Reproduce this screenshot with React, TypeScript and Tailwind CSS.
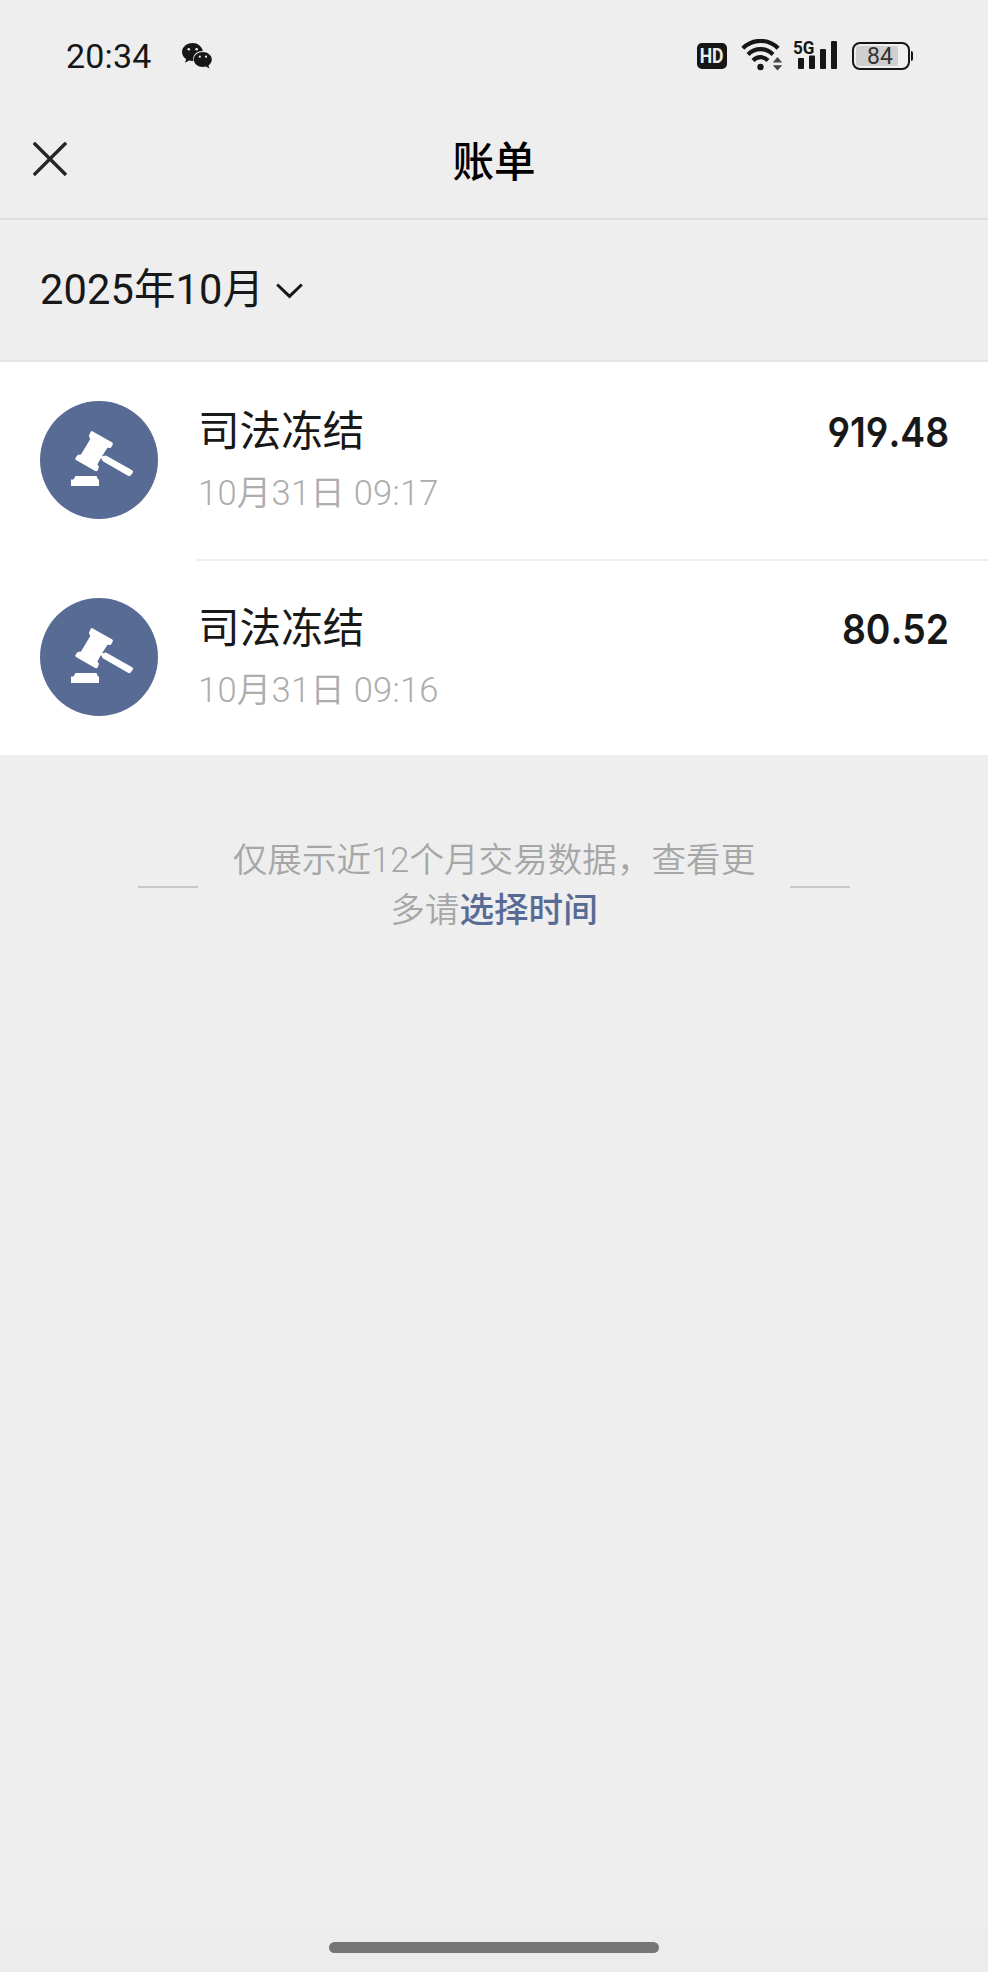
import React from "react";

interface Bill {
  id: number;
  title: string;
  time: string;
  amount: string;
}

const BILLS: Bill[] = [
  { id: 1, title: "司法冻结", time: "10月31日 09:17", amount: "919.48" },
  { id: 2, title: "司法冻结", time: "10月31日 09:16", amount: "80.52" },
];

const WeChatIcon = () => (
  <svg className="w-[30px] h-[26px]" viewBox="0 0 30 26" fill="#161616">
    <path d="M10.500 0C4.700 0 0 4 0 9c0 2.900 1.600 5.400 4.100 7l-1 3.700 4-2.100c1.100.300 2.200.400 3.400.400h1c-.200-.700-.300-1.300-.300-2 0-4.500 4.200-8 9.300-8h.400C19.800 3.400 15.600 0 10.500 0z" />
    <path d="M29.800 16.600c0-4.200-4.100-7.500-9-7.500s-9 3.300-9 7.500 4.100 7.500 9 7.500c1.100 0 2.200-.200 3.200-.500l3.300 1.800-.8-3c2-1.400 3.300-3.500 3.300-5.800z" />
    <g fill="#eee">
      <circle cx="6.800" cy="6.200" r="1.300" />
      <circle cx="14.600" cy="6.200" r="1.300" />
      <circle cx="17.800" cy="13.700" r="1.100" />
      <circle cx="24" cy="13.700" r="1.100" />
    </g>
  </svg>
);

const WifiIcon = () => (
  <svg className="w-[42px] h-[32px]" viewBox="0 0 42 32" fill="none">
    <g stroke="#161616" strokeWidth="4.2">
      <path d="M1.800 9.200C12 -.5 27 -.5 37.200 9.200" />
      <path d="M7 15.400C14.300 8.400 24.700 8.400 32 15.400" />
      <path d="M12 21.500C16.300 17.100 22.700 17.100 27 21.500" />
    </g>
    <circle cx="19.500" cy="28" r="3.200" fill="#161616" />
    <path d="M36.500 18l4.700 5.500h-9.400zM36.500 31.500l4.700-5.200h-9.400z" fill="#444" />
  </svg>
);

const SignalBars = () => (
  <svg className="w-[40px] h-[28px]" viewBox="0 0 40 28" fill="#161616">
    <rect x="0" y="17" width="6" height="11" rx="1" />
    <rect x="11" y="14.500" width="6" height="13.500" rx="1" />
    <rect x="22" y="8" width="6" height="20" rx="1" />
    <rect x="33" y="0" width="6" height="28" rx="1" />
  </svg>
);

const GavelIcon = () => (
  <svg className="w-[118px] h-[118px]" viewBox="0 0 118 118">
    <circle cx="59" cy="59" r="59" fill="#586b95" />
    <g fill="#fff">
      <path d="M52.300 30.200L72.300 41.600Q73.500 42.500 72.500 44L70.700 47 67.500 46.800 62 55.300 66 54.500 92.200 69.200Q93.700 70.200 92.800 71.800L90.600 74.600Q89.500 75.600 88 74.800L62.800 60.200 61 56.900 57.400 63.200 59 66 57.600 69.600Q56.700 70.900 55.200 70L36 59Q34.700 58 35.600 56.700L37.600 54 41 53.600 50.300 38 48.800 35 50.500 31.200Q51.200 29.800 52.300 30.200z" />
      <path d="M35.500 75H56.500L58 78.500H59V85H31V78.500H33.500z" />
    </g>
  </svg>
);

const StatusBar = () => (
  <div className="flex h-[112px] items-center justify-between pl-[66px] pr-[75px]">
    <div className="flex items-center gap-[30px]">
      <span className="text-[34px] leading-none tracking-[0.2px] text-[#161616]">20:34</span>
      <WeChatIcon />
    </div>
    <div className="flex items-center">
      <div className="flex h-[26px] w-[30px] items-center justify-center rounded-[5px] bg-[#161616]">
        <span className="origin-center scale-x-[0.88] text-[20px] leading-none font-bold text-[#eee]">
          HD
        </span>
      </div>
      <div className="ml-[14px] -mt-[3px]">
        <WifiIcon />
      </div>
      <div className="relative ml-[15px] mb-[2px]">
        <SignalBars />
        <span className="absolute -left-[5px] -top-[3px] origin-left scale-x-[0.9] text-[19px] leading-none font-bold text-[#161616]">
          5G
        </span>
      </div>
      <div className="ml-[14px] flex h-[28px] w-[58px] items-center rounded-[8px] border-2 border-[#161616] px-[2px]">
        <div className="h-[20px] w-[42px] rounded-[2px] bg-[#cfcfcf] text-center">
          <span className="ml-[6px] text-[23px] leading-[21px] text-[#333]">84</span>
        </div>
      </div>
      <div className="ml-[1px] h-[10px] w-[2px] rounded-r bg-[#161616]" />
    </div>
  </div>
);

const TitleBar = () => (
  <header className="grid h-[108px] grid-cols-3 items-start border-b-2 border-[#dedede] px-[33px]">
    <button type="button" aria-label="关闭" className="mt-[30px] w-[34px]">
      <svg className="h-[34px] w-[34px]" viewBox="0 0 34 34" fill="none">
        <path d="M.8 .8L33 33M33 .8L.8 33" stroke="#262626" strokeWidth="3.400" />
      </svg>
    </button>
    <h1 className="mt-[23px] text-center text-[41.600px] leading-[56px] font-medium text-black">
      账单
    </h1>
  </header>
);

const BillRow: React.FC<{ bill: Bill; last: boolean }> = ({ bill, last }) => (
  <li className="flex h-[197px] items-start pl-[40px]">
    <div className="mt-[39px]">
      <GavelIcon />
    </div>
    <div
      className={`ml-[39px] flex h-[199px] flex-1 justify-between pl-[1px] pr-[39px] ${
        last ? "" : "border-b-2 border-[#efefef]"
      }`}
    >
      <div className="pt-[40px]">
        <p className="text-[41.600px] leading-[60px] text-[#181818]">{bill.title}</p>
        <p className="mt-[6px] text-[34.500px] leading-[50px] font-[350] tracking-[0.25px] text-[#adadad]">
          {bill.time}
        </p>
      </div>
      <p className="mt-[40px] origin-right scale-x-[0.9] font-[Inter] text-[41.500px] leading-[60px] font-semibold text-[#181818] [font-feature-settings:'cv04'] [font-kerning:none]">
        {bill.amount}
      </p>
    </div>
  </li>
);

export default function App() {
  return (
    <div className="flex h-[1972px] w-[988px] flex-col overflow-hidden bg-[#eee] font-[Roboto,'Noto_Sans_CJK_SC',sans-serif]">
      <StatusBar />
      <TitleBar />

      {/* Month picker */}
      <button
        type="button"
        className="flex h-[142px] items-center border-b-2 border-[#e4e4e4] pl-[40px] text-[41.600px] text-[#181818]"
      >
        <span className="tracking-[0.1px]">2025年10月</span>
        <svg className="ml-[12px] mt-[1px] h-[16px] w-[27px]" viewBox="0 0 27 16" fill="none">
          <path d="M1.200 1.500L13.500 13.300 25.800 1.500" stroke="#181818" strokeWidth="3" />
        </svg>
      </button>

      <ul className="h-[393px] bg-white">
        {BILLS.map((bill, index) => (
          <BillRow key={bill.id} bill={bill} last={index === BILLS.length - 1} />
        ))}
      </ul>

      {/* Footer hint */}
      <div className="mt-[80px] flex items-center justify-center">
        <span className="mt-[3px] h-[2px] w-[60px] bg-[#c8c8c8]" />
        <p className="mx-[32px] w-[528px] text-center text-[34.600px] leading-[50px] font-[350] text-[#a6a6a6]">
          仅展示近12个月交易数据，查看更
          <br />
          多请<a className="font-medium text-[#586b95]">选择时间</a>
        </p>
        <span className="mt-[3px] h-[2px] w-[60px] bg-[#c8c8c8]" />
      </div>

      {/* Home indicator */}
      <div className="mt-auto flex h-[44px] justify-center bg-[#ececec] pt-[14px]">
        <div className="h-[11px] w-[330px] rounded-full bg-[#757575]" />
      </div>
    </div>
  );
}
